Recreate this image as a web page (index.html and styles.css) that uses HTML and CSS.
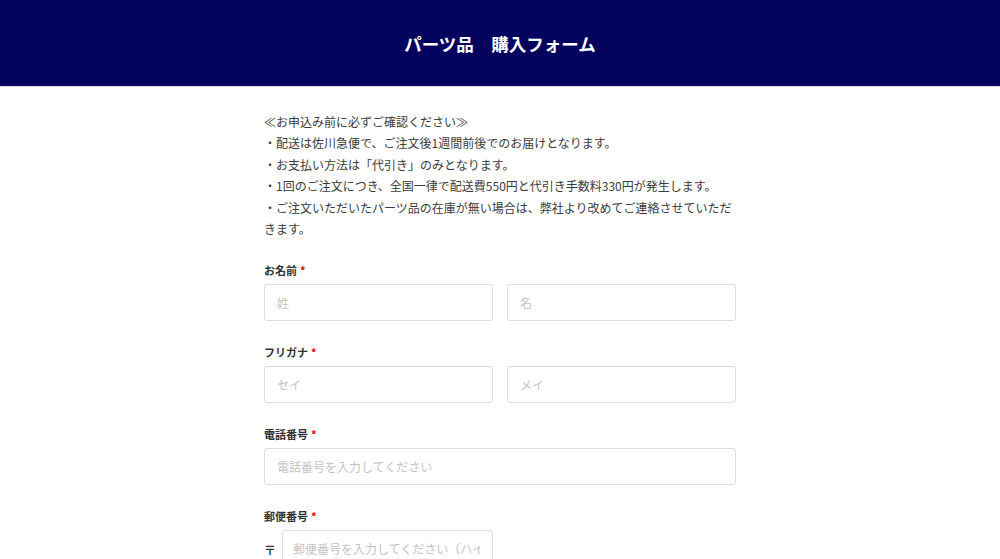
FILE: index.html
```html
<html>
<head>
<meta charset="utf-8">
<meta name="viewport" content="width=device-width, initial-scale=1">
<title>パーツ品 購入フォーム</title>
<link rel="stylesheet" href="styles.css">
</head>
<body>
<header class="header">
<h1>パーツ品　購入フォーム</h1>
</header>
<main class="wrap">
<div class="notice">
<p>≪お申込み前に必ずご確認ください≫</p>
<p>・配送は佐川急便で、ご注文後1週間前後でのお届けとなります。</p>
<p>・お支払い方法は「代引き」のみとなります。</p>
<p>・1回のご注文につき、全国一律で配送費550円と代引き手数料330円が発生します。</p>
<p>・ご注文いただいたパーツ品の在庫が無い場合は、弊社より改めてご連絡させていただきます。</p>
</div>
<form class="form">
<div class="field">
<label class="label">お名前<span class="req">*</span></label>
<div class="row">
<input type="text" placeholder="姓">
<input type="text" placeholder="名">
</div>
</div>
<div class="field">
<label class="label">フリガナ<span class="req">*</span></label>
<div class="row">
<input type="text" placeholder="セイ">
<input type="text" placeholder="メイ">
</div>
</div>
<div class="field">
<label class="label">電話番号<span class="req">*</span></label>
<input type="text" class="full" placeholder="電話番号を入力してください">
</div>
<div class="field">
<label class="label">郵便番号<span class="req">*</span></label>
<div class="zip">
<span class="mark">〒</span>
<input type="text" placeholder="郵便番号を入力してください（ハイフンなし）">
</div>
</div>
</form>
</main>
</body>
</html>
```

FILE: styles.css
```css
body {
  margin: 0;
  font-family: "Noto Sans CJK JP", "Noto Sans", sans-serif;
  color: #333;
  background: #fff;
}
.header {
  background-color: #04045f;
  height: 87px;
  display: flex;
  align-items: center;
  justify-content: center;
  border-bottom: 1px solid #ddd;
  box-sizing: border-box;
}
.header h1 {
  margin: 0;
  color: #fff;
  font-size: 17.5px;
  font-weight: bold;
}
.wrap {
  width: 472px;
  margin: 0 auto;
  padding-top: 24px;
}
.notice p {
  margin: 0;
  font-size: 12px;
  line-height: 21.4px;
  color: #3a3a3a;
}
.form {
  margin-top: 23px;
}
.field {
  margin-bottom: 23px;
}
.label {
  display: block;
  font-size: 11px;
  font-weight: bold;
  line-height: 16px;
  margin-bottom: 6px;
  color: #333;
}
.req {
  color: #e60000;
  margin-left: 3px;
}
.row {
  display: flex;
  gap: 14px;
}
input {
  box-sizing: border-box;
  height: 37px;
  border: 1px solid #ddd;
  border-radius: 3px;
  padding: 0 12px;
  font-family: "Noto Sans CJK JP", "Noto Sans", sans-serif;
  font-size: 12px;
  color: #333;
  width: 100%;
  min-width: 0;
}
input::placeholder {
  color: #c4c4c4;
}
.row input {
  flex: 1;
}
.zip {
  display: flex;
  align-items: center;
  gap: 8px;
}
.zip .mark {
  font-size: 12px;
  font-weight: bold;
  width: 10px;
  padding-top: 2px;
}
.zip input {
  width: 211px;
  padding-left: 10px;
}
```
